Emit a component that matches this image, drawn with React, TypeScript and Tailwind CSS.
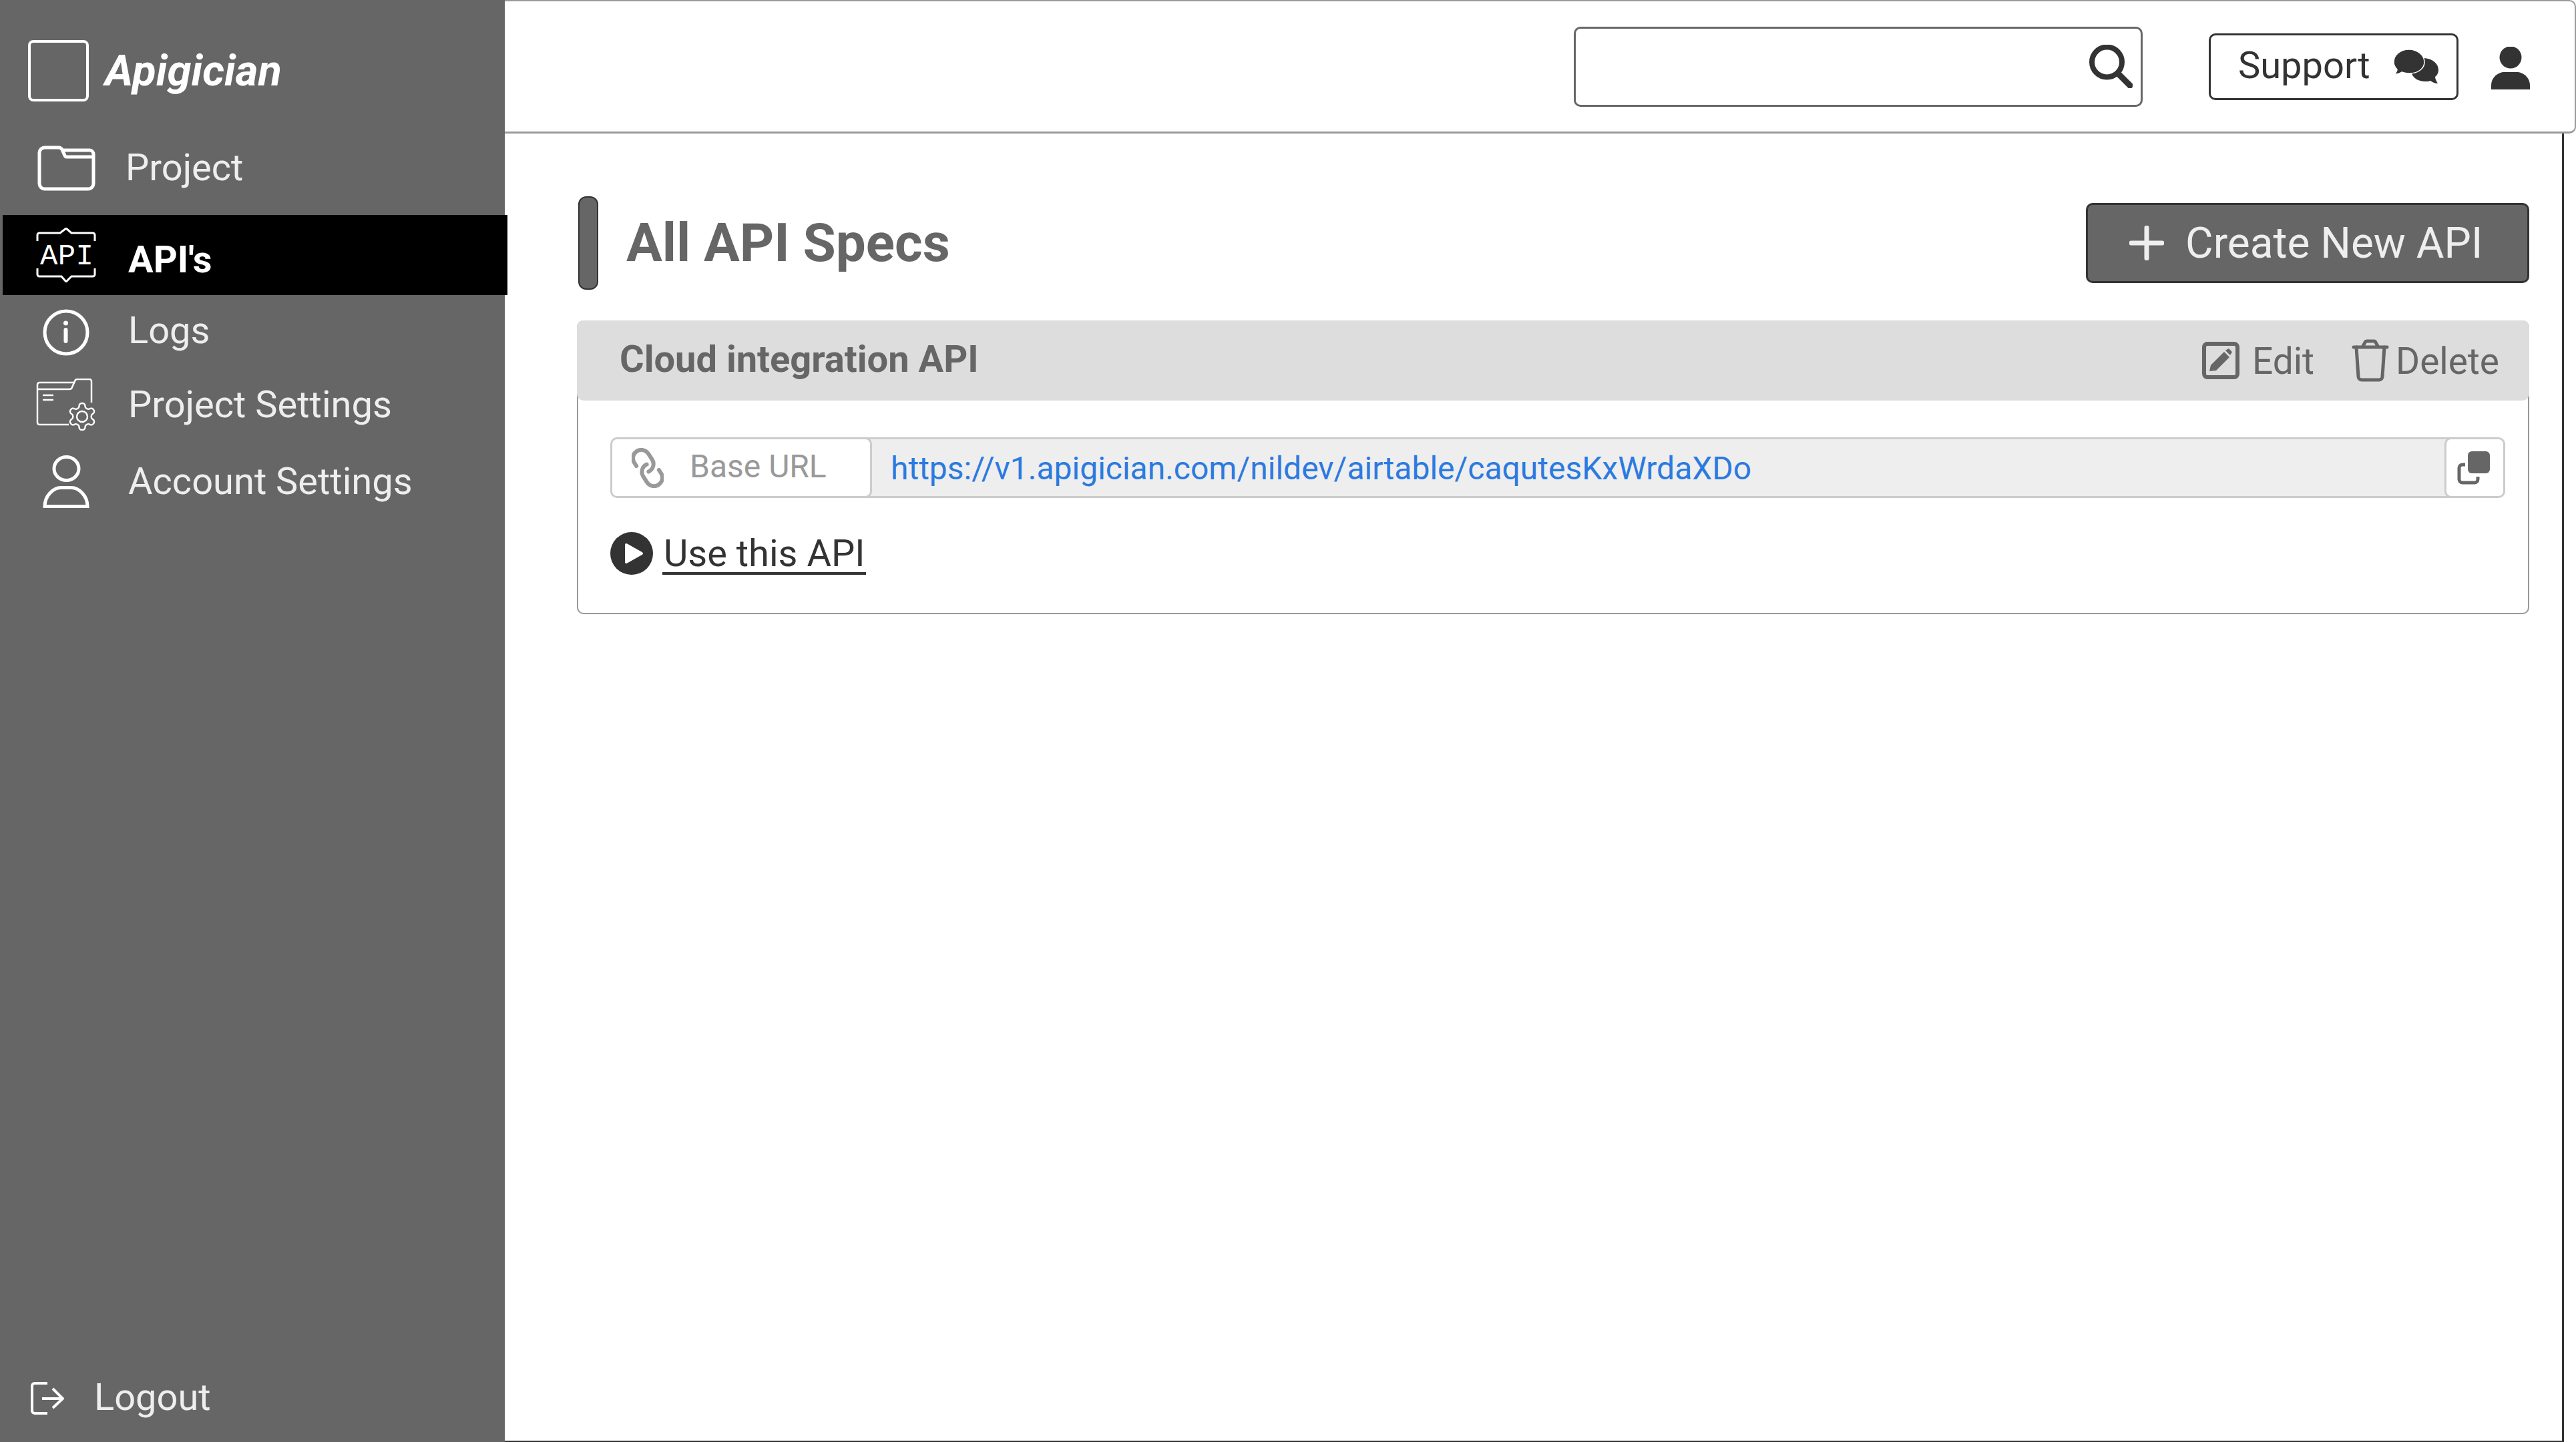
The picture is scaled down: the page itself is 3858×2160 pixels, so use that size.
import { ReactNode } from "react";
import clsx from "clsx";

const LogoBox = () => <div className="h-[92px] w-[91px] rounded-lg border-4 border-white" />;

const FolderIcon = () => (
  <svg width="87" height="68" viewBox="0 0 87 68" fill="none" stroke="#fff" strokeWidth="5">
    <path d="M3 11a8 8 0 0 1 8-8h21a6 6 0 0 1 5 3l4 9a3 3 0 0 0 3 2h40" />
    <path d="M3 11v46a8 8 0 0 0 8 8h65a8 8 0 0 0 8-8V13a6 6 0 0 0-6-6H38" />
  </svg>
);

const ApiIcon = () => (
  <svg width="90" height="82" viewBox="0 0 90 82" fill="none" stroke="#fff" strokeWidth="3">
    <path d="M2 20V11a3 3 0 0 1 3-3h31l9-7 8 7h32a3 3 0 0 1 3 3v9" />
    <path d="M2 61v9a3 3 0 0 0 3 3h33l7 8 8-8h32a3 3 0 0 0 3-3v-9" />
    <text x="6" y="55" textLength="80" fontFamily="'Liberation Mono', monospace" fontSize="44" fill="#fff" stroke="none">
      API
    </text>
  </svg>
);

const InfoIcon = () => (
  <svg width="70" height="70" viewBox="0 0 70 70" fill="none" stroke="#fff">
    <circle cx="35" cy="35" r="32" strokeWidth="5" />
    <circle cx="34.5" cy="21" r="3.5" fill="#fff" stroke="none" />
    <path d="M34.5 31v17" strokeWidth="6" strokeLinecap="round" />
  </svg>
);

const ProjectSettingsIcon = () => (
  <svg width="90" height="78" viewBox="0 0 90 78" fill="none" stroke="#fff" strokeWidth="2.5">
    <path d="M83 36V4a3 3 0 0 0-3-3H62a4 4 0 0 0-4 3l-4 9a4 4 0 0 1-4 3H2" />
    <path d="M2 16V9a3 3 0 0 1 3-3h52M2 9v57a3 3 0 0 0 3 3h44M10 25h16M10 32h16" />
    <g transform="translate(45 33) scale(2)" strokeWidth="1.2">
      <path d="M12.22 2h-.44a2 2 0 0 0-2 2v.18a2 2 0 0 1-1 1.73l-.43.25a2 2 0 0 1-2 0l-.15-.08a2 2 0 0 0-2.73.73l-.22.38a2 2 0 0 0 .73 2.73l.15.1a2 2 0 0 1 1 1.72v.51a2 2 0 0 1-1 1.74l-.15.09a2 2 0 0 0-.73 2.73l.22.38a2 2 0 0 0 2.73.73l.15-.08a2 2 0 0 1 2 0l.43.25a2 2 0 0 1 1 1.73V20a2 2 0 0 0 2 2h.44a2 2 0 0 0 2-2v-.18a2 2 0 0 1 1-1.73l.43-.25a2 2 0 0 1 2 0l.15.08a2 2 0 0 0 2.73-.73l.22-.39a2 2 0 0 0-.73-2.73l-.15-.08a2 2 0 0 1-1-1.74v-.5a2 2 0 0 1 1-1.74l.15-.09a2 2 0 0 0 .73-2.73l-.22-.38a2 2 0 0 0-2.73-.73l-.15.08a2 2 0 0 1-2 0l-.43-.25a2 2 0 0 1-1-1.73V4a2 2 0 0 0-2-2z" />
      <circle cx="12" cy="12" r="4" />
    </g>
  </svg>
);

const AccountIcon = () => (
  <svg width="70" height="79" viewBox="0 0 70 79" fill="none" stroke="#fff" strokeWidth="5">
    <ellipse cx="35.5" cy="20" rx="18.5" ry="17.5" />
    <path d="M3 76.500h64c0-16-13-28-24-28H27C16 48.500 3 60.500 3 76.500z" />
  </svg>
);

const LogoutIcon = () => (
  <svg width="50" height="50" viewBox="0 0 50 50" fill="none" stroke="#fff" strokeWidth="4">
    <path d="M25 2H6a4 4 0 0 0-4 4v37a4 4 0 0 0 4 4h19M17 25h30M33 10l15 15-15 14" />
  </svg>
);

const SearchIcon = () => (
  <svg width="65" height="65" viewBox="0 0 65 65" fill="none" stroke="#333">
    <circle cx="26.500" cy="26" r="22.500" strokeWidth="8" />
    <path d="M43 43l18 18" strokeWidth="9" strokeLinecap="round" />
  </svg>
);

const BubblesIcon = () => (
  <svg width="67" height="52" viewBox="0 0 67 52" fill="#333">
    <path d="M46 13c12 1 21 8 21 18 0 4-2 8-5 10 0 3 2 7 4 10-5 0-8-2-11-4-3 1-5 1-8 1-10 0-18-5-20-12z" />
    <path
      d="M23 0C10 0 0 8 0 19c0 5 2 8 5 11 0 3-2 5-4 7 4 0 8-1 11-3 3 1 7 2 11 2 13 0 23-7 23-17S36 0 23 0z"
      stroke="#fff"
      strokeWidth="1.500"
    />
  </svg>
);

const PersonIcon = () => (
  <svg width="58" height="64" viewBox="0 0 58 64" fill="#333">
    <circle cx="29" cy="16" r="16.500" />
    <path d="M0 64v-6c0-12 10-20 20-20h18c10 0 20 8 20 20v6z" />
  </svg>
);

const PlusIcon = () => (
  <svg width="52" height="52" viewBox="0 0 52 52" fill="none" stroke="#eee" strokeWidth="7" strokeLinecap="round">
    <path d="M26 3v46M3 26h46" />
  </svg>
);

const EditIcon = () => (
  <svg width="56" height="56" viewBox="0 0 56 56" fill="none">
    <rect x="3" y="3" width="50" height="50" rx="5" stroke="#666" strokeWidth="6" />
    <path d="M11 44l2-9 20-20 8 8-20 20zM35 13l3-2a2 2 0 0 1 3 0l3 3a2 2 0 0 1 0 3l-2 3z" fill="#666" />
  </svg>
);

const TrashIcon = () => (
  <svg width="56" height="64" viewBox="0 0 56 64" fill="none" stroke="#666" strokeWidth="5" strokeLinecap="round">
    <path d="M3 12h50M16 12l4-7a3 3 0 0 1 3-2h10a3 3 0 0 1 3 2l4 7" />
    <path d="M7 12l3 44a5 5 0 0 0 5 5h26a5 5 0 0 0 5-5l3-44" />
  </svg>
);

const LinkIcon = () => (
  <svg width="48" height="60" viewBox="0 0 48 60" fill="none" stroke="#999" strokeLinecap="round">
    <g transform="translate(24 30) rotate(102) scale(2.5) translate(-12 -12)" strokeWidth="2.4">
      <path d="M10 13a5 5 0 0 0 7.54.54l3-3a5 5 0 0 0-7.07-7.07l-1.72 1.71" />
      <path d="M14 11a5 5 0 0 0-7.54-.54l-3 3a5 5 0 0 0 7.07 7.07l1.71-1.71" />
    </g>
  </svg>
);

const CopyIcon = () => (
  <svg width="50" height="50" viewBox="0 0 50 50" fill="none">
    <rect x="16" y="0" width="33" height="33" rx="6" fill="#666" />
    <path d="M12 20H8a5 5 0 0 0-5 5v17a5 5 0 0 0 5 5h18a5 5 0 0 0 5-5v-4" stroke="#666" strokeWidth="5" />
  </svg>
);

const PlayIcon = () => (
  <svg width="64" height="64" viewBox="0 0 64 64">
    <circle cx="32" cy="32" r="32" fill="#333" />
    <path d="M24 19l23 13-23 13z" fill="#fff" stroke="#fff" strokeWidth="4" strokeLinejoin="round" />
  </svg>
);

type NavItemProps = {
  icon: ReactNode;
  label: string;
  className: string;
  labelClassName?: string;
};

const NavItem = ({ icon, label, className, labelClassName }: NavItemProps) => (
  <div className={clsx("flex items-center", className)}>
    <span className="flex w-[90px] shrink-0 justify-center">{icon}</span>
    <span className={clsx("text-[56px] leading-none", labelClassName ?? "ml-[48px]")}>{label}</span>
  </div>
);

const Sidebar = () => (
  <aside className="relative z-10 flex w-[756px] shrink-0 flex-col bg-[#666] pt-[60px] text-[#eee]">
    <div className="flex items-center pl-[42px]">
      <LogoBox />
      <span className="ml-[24px] text-[65px] font-bold italic leading-none text-white">Apigician</span>
    </div>
    <NavItem icon={<FolderIcon />} label="Project" className="mt-[66px] h-[68px] pl-[54px]" labelClassName="ml-[44px] pb-[2px]" />
    <NavItem
      icon={<ApiIcon />}
      label="API's"
      className="ml-1 mt-[36px] h-[120px] w-[756px] bg-black pl-[50px] text-white"
      labelClassName="ml-[48px] pt-[14px] font-bold"
    />
    <NavItem icon={<InfoIcon />} label="Logs" className="mt-[21px] h-[69px] pl-[54px]" labelClassName="ml-[48px] pb-[6px]" />
    <NavItem icon={<ProjectSettingsIcon />} label="Project Settings" className="mt-[35px] h-[78px] pl-[54px]" labelClassName="ml-[48px] pb-[1px]" />
    <NavItem icon={<AccountIcon />} label="Account Settings" className="mt-[37px] h-[79px] pl-[54px]" labelClassName="ml-[48px] pb-[2px]" />
    <div className="mt-auto mb-[35px] flex items-center pl-[46px]">
      <LogoutIcon />
      <span className="ml-[45px] pb-[4px] text-[56px] leading-none">Logout</span>
    </div>
  </aside>
);

const TopBar = () => (
  <header className="flex h-[200px] shrink-0 items-center justify-end rounded-r-[10px] border-t-2 border-r-2 border-b-[3px] border-[#999] bg-white pr-[67px]">
    <div className="flex h-[120px] w-[852px] items-center rounded-[10px] border-[3px] border-[#666] pr-[12px]">
      <input className="h-full min-w-0 flex-1 bg-transparent outline-none" />
      <SearchIcon />
    </div>
    <button className="ml-[99px] flex h-[100px] w-[374px] items-center rounded-[10px] border-[3px] border-[#333] pl-[41px] text-[#333]">
      <span className="pb-[3px] text-[56px] leading-none">Support</span>
      <span className="ml-[35px]">
        <BubblesIcon />
      </span>
    </button>
    <span className="ml-[49px] pt-[4px]">
      <PersonIcon />
    </span>
  </header>
);

const ApiCard = () => (
  <section className="mt-[46px] rounded-[10px] border-x-2 border-b-2 border-[#999]">
    <div className="-mx-[2px] flex h-[120px] items-center justify-between rounded-[10px] bg-[#ddd] pr-[45px] pl-[64px] text-[#666]">
      <h2 className="pb-[4px] text-[56px] font-bold leading-none">Cloud integration API</h2>
      <div className="flex items-center text-[55px] leading-none">
        <EditIcon />
        <span className="ml-[19px] pt-[3px]">Edit</span>
        <span className="ml-[56px]">
          <TrashIcon />
        </span>
        <span className="ml-[10px] pt-[3px]">Delete</span>
      </div>
    </div>
    <div className="pt-[55px] pr-[34px] pb-[57px] pl-[48px]">
      <div className="flex h-[91px] items-stretch">
        <div className="relative z-10 flex w-[392px] items-center rounded-[10px] border-[3px] border-[#ccc] bg-white pl-[29px] text-[#999]">
          <LinkIcon />
          <span className="ml-[39px] pb-[3px] text-[48px] leading-none">Base URL</span>
        </div>
        <div className="-mx-[10px] flex flex-1 items-center border-y-[3px] border-[#ccc] bg-[#eee] pt-[2px] pl-[38px] text-[48px] leading-none text-[#2b7ae0]">
          https://v1.apigician.com/nildev/airtable/caqutesKxWrdaXDo
        </div>
        <div className="relative z-10 flex w-[91px] items-center justify-center rounded-[10px] border-[3px] border-[#ccc] bg-white pr-[3px]">
          <CopyIcon />
        </div>
      </div>
      <div className="mt-[51px] flex items-center">
        <PlayIcon />
        <a className="ml-[14px] border-b-[4px] border-[#333] px-[2px] pt-[4px] text-[56px] leading-none text-[#333]">Use this API</a>
      </div>
    </div>
  </section>
);

export default function App() {
  return (
    <div className="flex h-screen bg-white font-['Roboto',sans-serif]">
      <Sidebar />
      <div className="flex min-w-0 flex-1 flex-col">
        <TopBar />
        <main className="mr-[18px] flex-1 border-r-[3px] border-b-2 border-[#333] pt-[94px] pr-[49px] pl-[108px]">
          <div className="flex h-[140px] items-center">
            <div className="ml-[2px] h-[140px] w-[30px] rounded-[12px] border-2 border-[#333] bg-[#666]" />
            <h1 className="ml-[42px] text-[80px] font-bold leading-none text-[#666]">All API Specs</h1>
            <button className="ml-auto flex h-[120px] w-[664px] items-center rounded-[10px] border-[3px] border-[#333] bg-[#666] pl-[62px] text-[64px] leading-none text-[#eee]">
              <PlusIcon />
              <span className="ml-[32px] pt-[2px]">Create New API</span>
            </button>
          </div>
          <ApiCard />
        </main>
      </div>
    </div>
  );
}
